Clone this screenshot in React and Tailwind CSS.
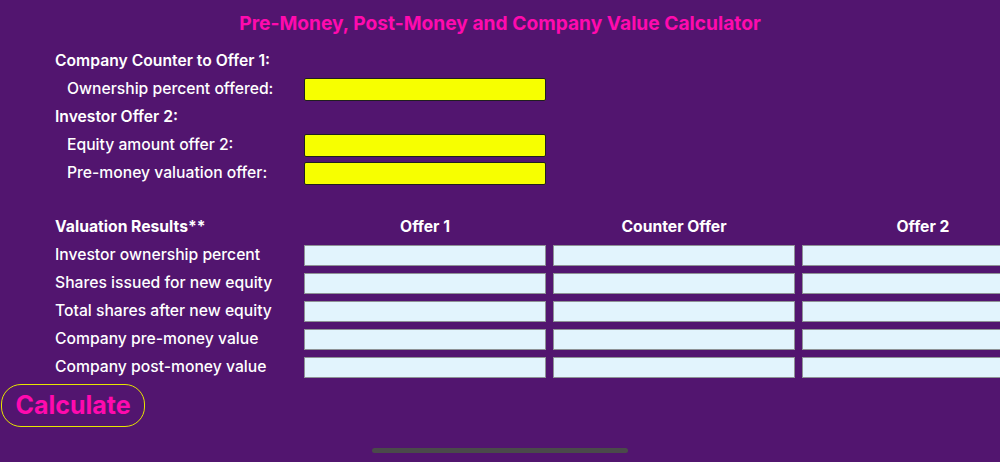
import React from 'react';

const font = { fontFamily: 'Inter, "Noto Sans", sans-serif' };

const InputRow = ({ label }) => (
  <div className="flex h-[28px] items-center">
    <div className="w-[249px] shrink-0 pl-[12px] text-[15.7px] font-medium text-white">{label}</div>
    <div className="h-[23px] w-[242px] shrink-0 rounded-[2px] border-[1.5px] border-[#1f1f1f] bg-[#f7ff00]" />
  </div>
);

const Heading = ({ children }) => (
  <div className="flex h-[28px] items-center text-[15.7px] font-semibold text-white">{children}</div>
);

const ResultRow = ({ label }) => (
  <div className="flex h-[28px] items-center gap-[7px]">
    <div className="w-[242px] shrink-0 whitespace-nowrap text-[15.7px] font-medium text-white">{label}</div>
    {[0, 1, 2].map((i) => (
      <div key={i} className="h-[21px] w-[242px] shrink-0 border-[1.5px] border-[#8e9296] bg-[#e2f4fd]" />
    ))}
  </div>
);

const App = () => {
  const results = [
    'Investor ownership percent',
    'Shares issued for new equity',
    'Total shares after new equity',
    'Company pre-money value',
    'Company post-money value',
  ];

  return (
    <div className="relative h-[462px] w-[1000px] overflow-hidden bg-[#52156f]" style={font}>
      <h1 className="pt-[11px] text-center text-[19.2px] font-bold leading-[24px] text-[#ff0aae]">
        Pre-Money, Post-Money and Company Value Calculator
      </h1>

      <div className="mt-[12px] pl-[55px]">
        <Heading>Company Counter to Offer 1:</Heading>
        <InputRow label="Ownership percent offered:" />
        <Heading>Investor Offer 2:</Heading>
        <InputRow label="Equity amount offer 2:" />
        <InputRow label="Pre-money valuation offer:" />
      </div>

      <div className="mt-[26px] pl-[55px]">
        <div className="flex h-[28px] items-center gap-[7px] whitespace-nowrap text-[15.7px] font-bold text-white">
          <div className="w-[242px] shrink-0">Valuation Results**</div>
          <div className="w-[242px] shrink-0 text-center">Offer 1</div>
          <div className="w-[242px] shrink-0 text-center">Counter Offer</div>
          <div className="w-[242px] shrink-0 text-center">Offer 2</div>
        </div>
        {results.map((r) => (
          <ResultRow key={r} label={r} />
        ))}
      </div>

      <button className="ml-[1px] mt-[3px] flex h-[43px] w-[144px] items-center justify-center rounded-[20px] border border-[#e6e600] text-[25px] font-bold text-[#ff0aae]">
        Calculate
      </button>

      <div className="absolute bottom-[9px] left-[372px] h-[5px] w-[256px] rounded-full bg-[#4a4a4a]" />
    </div>
  );
};

export default App;
